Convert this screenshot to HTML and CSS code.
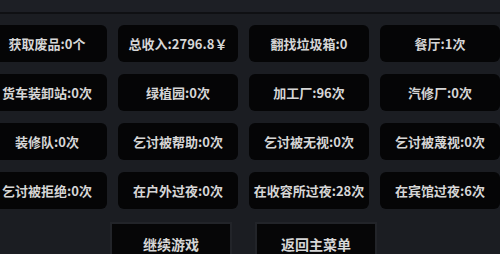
FILE: index.html
```html
<!DOCTYPE html>
<html>

<head>
    <meta charset="utf-8" />
    <title>统计</title>
    <link rel="stylesheet" href="styles.css">
</head>

<body>
    <div class="topbar"></div>
    <div class="stats">
        <div class="cell">获取废品:0个</div>
        <div class="cell">总收入:2796.8￥</div>
        <div class="cell">翻找垃圾箱:0</div>
        <div class="cell">餐厅:1次</div>
        <div class="cell">货车装卸站:0次</div>
        <div class="cell">绿植园:0次</div>
        <div class="cell">加工厂:96次</div>
        <div class="cell">汽修厂:0次</div>
        <div class="cell">装修队:0次</div>
        <div class="cell">乞讨被帮助:0次</div>
        <div class="cell">乞讨被无视:0次</div>
        <div class="cell">乞讨被蔑视:0次</div>
        <div class="cell">乞讨被拒绝:0次</div>
        <div class="cell">在户外过夜:0次</div>
        <div class="cell">在收容所过夜:28次</div>
        <div class="cell">在宾馆过夜:6次</div>
    </div>
    <div class="btns">
        <div class="btn">继续游戏</div>
        <div class="btn">返回主菜单</div>
    </div>
</body>

</html>
```

FILE: styles.css
```css
body {
    margin: 0;
    padding: 0;
    width: 500px;
    height: 254px;
    overflow: hidden;
    background: #1b1d22;
    font-family: "Noto Sans CJK SC", "Liberation Sans", sans-serif;
    color: #d6d6d6;
}

.topbar {
    height: 12px;
    background: #1d1f25;
    border-bottom: 2px solid #0f1013;
}

.stats {
    display: grid;
    grid-template-columns: repeat(4, 120px);
    grid-auto-rows: 37px;
    column-gap: 11px;
    row-gap: 12px;
    margin: 11px 0 0 -13px;
}

.cell {
    background: #050506;
    border-radius: 6px;
    display: flex;
    align-items: center;
    justify-content: center;
    font-size: 13px;
    font-weight: bold;
    white-space: nowrap;
}

.btns {
    display: flex;
    gap: 23px;
    margin: 13px 0 0 110px;
}

.btn {
    width: 118px;
    height: 40px;
    background: #060607;
    border: 2px solid #222429;
    display: flex;
    align-items: center;
    justify-content: center;
    font-size: 14px;
    font-weight: bold;
}
```
